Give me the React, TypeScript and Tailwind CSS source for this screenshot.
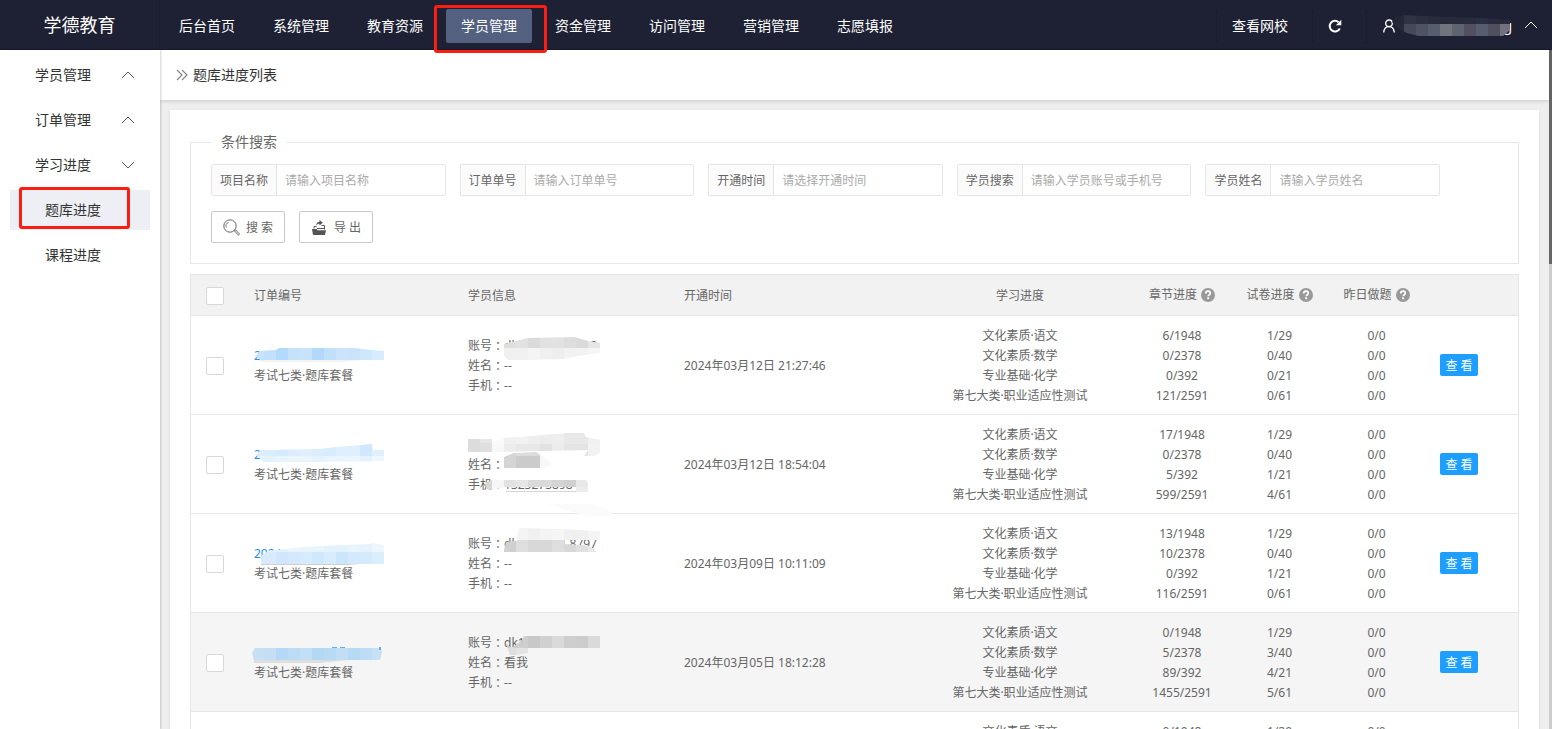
import React, { useState } from 'react';

type Tile = [number, number, number, number, string];

interface Patch {
  clip: string;
  tiles: Tile[];
}

interface Order {
  id: string;
  code: string;
  account: string[];
  name: string;
  phone: string;
  progress: [string, string, string][];
  codeMask: Patch[];
  infoMask: Patch[];
  highlighted?: boolean;
}

const NAV = ['后台首页', '系统管理', '教育资源', '学员管理', '资金管理', '访问管理', '营销管理', '志愿填报'];
const SUBJECTS = ['文化素质·语文', '文化素质·数学', '专业基础·化学', '第七大类·职业适应性测试'];

const FILTERS = [
  { id: 'project', label: '项目名称', placeholder: '请输入项目名称' },
  { id: 'order', label: '订单单号', placeholder: '请输入订单单号' },
  { id: 'opened', label: '开通时间', placeholder: '请选择开通时间' },
  { id: 'student', label: '学员搜索', placeholder: '请输入学员账号或手机号' },
  { id: 'name', label: '学员姓名', placeholder: '请输入学员姓名' },
];

// One strip of 12px mosaic blocks
const strip = (x: number, y: number, h: number, colors: string[]): Tile[] =>
  colors.map((c, i) => [x + i * 12, y, 12, h, c]);

const ORDERS: Order[] = [
  {
    id: '2024年03月12日 21:27:46',
    code: '2',
    account: ['dk', '12'],
    name: '--',
    phone: '--',
    progress: [['6/1948', '1/29', '0/0'], ['0/2378', '0/40', '0/0'], ['0/392', '0/21', '0/0'], ['121/2591', '0/61', '0/0']],
    codeMask: [
      { clip: '6,6 22,5 25,3 100,3 117,5 130,6 130,15 6,15 1,11', tiles: strip(-2, 3, 12, ['#c6e3fb', '#c0e0fb', '#b3dafa', '#c6e2fb', '#c8e4fb', '#b2d8fa', '#bfdffb', '#c9e4fb', '#c8e3fa', '#cde7fc', '#d6ebfd']) },
      { clip: '4,15 106,15 90,17 8,17', tiles: [[0, 15, 110, 2, '#f3f3f3']] },
    ],
    infoMask: [
      {
        clip: '36,9 60,3 106,2 120,6 132,8 132,18 110,21 96,24 60,25 40,25 36,21',
        tiles: [
          ...strip(36, 0, 13, ['#dfdfdf', '#e2e2e2', '#dadada', '#e2e2e2', '#e2e2e2', '#dedede', '#dadada', '#e6e6e6']),
          ...strip(36, 13, 12, ['#f0f0f0', '#f0f0f0', '#f4f4f4', '#f0f0f0', '#eeeeee', '#f2f2f2', '#f2f2f2', '#f6f6f6']),
        ],
      },
    ],
  },
  {
    id: '2024年03月12日 18:54:04',
    code: '2',
    account: [],
    name: '',
    phone: '1323273898',
    progress: [['17/1948', '1/29', '0/0'], ['0/2378', '0/40', '0/0'], ['5/392', '1/21', '0/0'], ['599/2591', '4/61', '0/0']],
    codeMask: [
      {
        clip: '6,6 66,5 82,3 118,0 119,6 130,6 130,17 55,18 10,18 3,12',
        tiles: [
          ...strip(-2, 0, 12, ['#dceefd', '#dceefd', '#d6ebfd', '#dceefd', '#e0effd', '#dceefd', '#d8ecfd', '#dfeffd', '#dfeffd', '#d0e7fd', '#dff0fd']),
          ...strip(-2, 12, 6, ['#e8f4fe', '#e4f2fe', '#e8f4fe', '#eaf5fe', '#eaf5fe', '#e4f2fe', '#e8f4fe', '#eaf5fe', '#eaf5fe', '#e4f2fe', '#eef7fe']),
        ],
      },
    ],
    infoMask: [
      { clip: '0,5 24,5 24,18 0,18', tiles: [[0, 5, 12, 13, '#dcdcdc'], [12, 5, 12, 4, '#e6e6e6'], [12, 9, 12, 9, '#dfdfdf']] },
      {
        clip: '24,8 36,4 100,-1 116,-1 118,3 132,6 132,19 126,22 116,22 120,16 24,18',
        tiles: [
          ...strip(24, -1, 11, ['#fafafa', '#f0f0f0', '#f2f2f2', '#eeeeee', '#ececec', '#eeeeee', '#e8e8e8', '#e8e8e8', '#f0f0f0']),
          ...strip(24, 10, 12, ['#f8f8f8', '#ececec', '#e8e8e8', '#e8e8e8', '#e2e2e2', '#ececec', '#e4e4e4', '#e4e4e4', '#f2f2f2']),
        ],
      },
      { clip: '36,23 46,19 68,18 75,22 84,30 76,34 36,34', tiles: [[36, 17, 12, 17, '#d4d4d4'], [48, 17, 24, 5, '#dcdcdc'], [48, 22, 24, 12, '#cbcbcb'], [72, 17, 12, 17, '#f8f8f8']] },
      { clip: '18,48 24,46 118,46 120,49 120,58 38,58 38,53 24,56 18,55', tiles: [...strip(12, 46, 7, ['#d6d6d6', '#f6f6f6', '#e2e2e2', '#e6e6e6', '#dadada', '#dadada', '#d4d4d4', '#d0d0d0', '#e8e8e8']), [18, 53, 6, 5, '#dadada'], [24, 53, 12, 5, '#f6f6f6'], [38, 57, 70, 1, '#d6d6d6'], [108, 53, 12, 5, '#ececec']] },
      { clip: '79,70 126,70 144,78 144,82 118,82', tiles: [[79, 70, 66, 12, '#fbfbfb']] },
    ],
  },
  {
    id: '2024年03月09日 10:11:09',
    code: '2024',
    account: ['dk', '8797'],
    name: '--',
    phone: '--',
    progress: [['13/1948', '1/29', '0/0'], ['10/2378', '0/40', '0/0'], ['0/392', '1/21', '0/0'], ['116/2591', '0/61', '0/0']],
    codeMask: [
      {
        clip: '7,13 14,8 40,5 66,3 116,1 118,0 130,2 130,21 7,21',
        tiles: [
          ...strip(-2, 0, 9, ['#e8f4fe', '#e8f4fe', '#e4f2fe', '#e8f4fe', '#e8f4fe', '#e8f4fe', '#e4f2fe', '#e4f2fe', '#e8f4fe', '#e6f3fe', '#eef7fe']),
          ...strip(-2, 9, 12, ['#d8ebfd', '#d8ebfd', '#cfe6fd', '#d4e9fd', '#d6ebfd', '#d0e8fc', '#d6ecfc', '#cbe5fc', '#d4e9fd', '#d4ebfc', '#dbeefd']),
        ],
      },
      { clip: '7,21 106,21 94,22 7,22', tiles: [[7, 21, 100, 1, '#cfcfcf']] },
    ],
    infoMask: [
      { clip: '49,1 52,-5 90,-4 132,-2 132,7 49,7', tiles: strip(48, -5, 12, ['#f4f4f4', '#f0f0f0', '#f4f4f4', '#f6f6f6', '#f0f0f0', '#f0f0f0', '#f4f4f4']) },
      { clip: '36,17 38,9 52,7 97,7 97,11 114,12 122,13 129,19 36,19', tiles: strip(36, 7, 12, ['#d0d0d0', '#dedede', '#d8d8d8', '#d8d8d8', '#dedede', '#d8d8d8', '#e0e0e0', '#e8e8e8']) },
    ],
  },
  {
    id: '2024年03月05日 18:12:28',
    code: '2',
    account: ['dk1'],
    name: '看我',
    phone: '--',
    highlighted: true,
    progress: [['0/1948', '1/29', '0/0'], ['5/2378', '3/40', '0/0'], ['89/392', '4/21', '0/0'], ['1455/2591', '5/61', '0/0']],
    codeMask: [
      { clip: '-2,11 1,6 126,6 128,10 126,18 0,18', tiles: strip(-2, 6, 12, ['#c6dff4', '#c4dff5', '#b4d8f5', '#bcdcf5', '#c2dff5', '#b2d8f4', '#b8daf5', '#c2def4', '#b6d9f4', '#bedcf5', '#c8e0f4']) },
      { clip: '0,18 94,18 66,21 0,21', tiles: [[0, 18, 96, 3, '#dedede']] },
      { clip: '78,5 127,5 127,8 78,6', tiles: [[78, 5, 5, 1, '#5ab0f2'], [86, 5, 5, 1, '#5ab0f2'], [125, 5, 2, 3, '#5ab0f2']] },
    ],
    infoMask: [
      { clip: '38,12 44,16 54,8 56,4 132,4 132,16 60,16 60,21 48,23 42,23', tiles: [...strip(36, 4, 12, ['#cccccc', '#cecece', '#c8c8c8', '#d0d0d0', '#dadada', '#cecece', '#cccccc', '#dadada']), ...strip(36, 16, 8, ['#dedede', '#e4e4e4'])] },
    ],
  },
  {
    id: '2024年03月04日 16:20:35',
    code: '2024',
    account: ['--'],
    name: '--',
    phone: '--',
    progress: [['0/1948', '1/29', '0/0'], ['0/2378', '0/40', '0/0'], ['0/392', '0/21', '0/0'], ['0/2591', '0/61', '0/0']],
    codeMask: [],
    infoMask: [],
  },
];

const Mosaic: React.FC<{ id: string; patches: Patch[] }> = ({ id, patches }) => (
  <svg className="pointer-events-none absolute -top-px left-0 h-px w-px overflow-visible" aria-hidden="true">
    {patches.map((p, i) => (
      <g key={i} clipPath={`url(#${id}-${i})`}>
        <clipPath id={`${id}-${i}`}><polygon points={p.clip} /></clipPath>
        {p.tiles.map(([x, y, w, h, fill], j) => (
          <rect key={j} x={x} y={y} width={w} height={h} fill={fill} shapeRendering="crispEdges" />
        ))}
      </g>
    ))}
  </svg>
);

const Chevron: React.FC<{ down?: boolean; className?: string }> = ({ down, className = '' }) => (
  <svg viewBox="0 0 14 8" className={`h-2 w-3.5 ${down ? 'rotate-180' : ''} ${className}`} fill="none" stroke="currentColor">
    <path d="M1 7 7 1l6 6" />
  </svg>
);

const HelpIcon: React.FC = () => (
  <svg viewBox="0 0 14 14" className="h-3.5 w-3.5">
    <circle cx="7" cy="7" r="7" fill="#999" />
    <path d="M4.800 5.400C4.800 4 5.700 3.200 7 3.200s2.300.8 2.300 2c0 1.600-2.100 1.700-2.100 3.100" fill="none" stroke="#fff" strokeWidth="1.8" />
    <rect x="6.200" y="9.300" width="1.900" height="1.900" fill="#fff" />
  </svg>
);

const Field: React.FC<{ label: string; children: React.ReactNode }> = ({ label, children }) => (
  <div className="flex h-5">
    <span>{label}</span>
    <span className="font-['Noto_Sans_CJK_TC',sans-serif]">：</span>
    {children}
  </div>
);

const Header: React.FC = () => (
  <header className="flex h-[50px] shrink-0 border-b border-[#16192a] bg-[#1e2133] text-sm text-white">
    <div className="flex w-40 shrink-0 items-center justify-center border-r border-[#191c2c] text-lg">学德教育</div>
    <nav className="flex items-center pt-0.5">
      {NAV.map((item) => {
        const active = item === '学员管理';
        return (
          <a key={item} href="#" className={`relative mx-1 rounded-xs px-[15px] py-[7px] leading-5 ${active ? 'bg-[#546080]' : ''}`}>
            {item}
            {active && <span className="absolute -bottom-[10px] -left-3 -right-[15px] -top-1 z-10 rounded-[3px] border-[3px] border-[#fb1d12]" />}
          </a>
        );
      })}
    </nav>
    <div className="ml-auto flex items-center pt-0.5">
      <a href="#" className="border-l border-[#191c2c] py-[7px] pl-[15px] pr-6 leading-5">查看网校</a>
      <button aria-label="刷新" className="flex h-[34px] items-center border-l border-[#191c2c] pl-[15px] pr-6">
        <svg viewBox="0 0 14 14" className="h-3.5 w-3.5">
          <path d="M11.800 9.500A5.300 5.300 0 1 1 10.600 3.200" fill="none" stroke="#fff" strokeWidth="2" />
          <path d="M13.300.8v5.400H7.900z" fill="#fff" />
        </svg>
      </button>
      <button aria-label="账户" className="relative flex h-[34px] items-center border-l border-[#191c2c] pl-4 pr-3.5">
        <svg viewBox="0 0 12 14" className="h-3.5 w-3" fill="none" stroke="#fff" strokeWidth="1.3">
          <circle cx="6" cy="4.300" r="3.300" />
          <path d="M.7 13.500C1 10 3 7.600 6 7.600s5 2.400 5.300 5.900" />
        </svg>
        <span className="w-[117px] text-right">g</span>
        <span className="absolute left-7 top-2">
          <Mosaic
            id="account"
            patches={[{
              clip: '-3,6 1,1 9,-1 28,0 90,2 115,4 115,14 108,20 23,20 12,17 4,13',
              tiles: [
                ...strip(-3, -2, 10, ['#242736', '#2e3243', '#2a2e3e', '#282b3c', '#262a3b', '#262a3b', '#282b3c', '#2a2e42', '#262a3c', '#262a3c']),
                ...strip(-3, 8, 12, ['#262938', '#444858', '#4e5364', '#565d6e', '#70747e', '#5e636f', '#524f60', '#565d6e', '#504f60', '#74717f']),
              ],
            }]}
          />
        </span>
        <Chevron className="-mt-0.5 ml-3" />
      </button>
    </div>
  </header>
);

const Sidebar: React.FC = () => (
  <aside className="z-[6] flex w-40 shrink-0 flex-col gap-[5px] bg-white pt-[5px] text-sm text-[#333] shadow-[1px_0_2px_rgba(0,0,0,0.18)]">
    {['学员管理', '订单管理', '学习进度'].map((group) => (
      <button key={group} className="flex h-10 items-center justify-between pl-[35px] pr-[25px]">
        {group}
        <Chevron down={group === '学习进度'} className="text-[#555]" />
      </button>
    ))}
    <a href="#" className="relative mx-2.5 flex h-10 items-center bg-[#eeeff4] pl-[35px]">
      题库进度
      <span className="absolute -top-[3px] bottom-px left-[9px] right-5 rounded-[3px] border-[3px] border-[#fb1d12]" />
    </a>
    <a href="#" className="mx-2.5 flex h-10 items-center pl-[35px]">课程进度</a>
  </aside>
);

const SearchPanel: React.FC = () => (
  <fieldset className="border border-[#e6e6e6] px-5 pb-5">
    <legend className="px-2.5 text-sm leading-5 text-[#666]">条件搜索</legend>
    <div className="mt-3 grid max-w-[1229px] grid-cols-5 gap-3.5">
      {FILTERS.map((f) => (
        <div key={f.id} className="flex h-8 rounded-xs border border-[#e6e6e6]">
          <label htmlFor={f.id} className="flex w-[65px] shrink-0 items-center justify-center border-r border-[#e6e6e6] bg-[#fbfbfb] pt-0.5">{f.label}</label>
          <input id={f.id} placeholder={f.placeholder} className="w-full min-w-0 pl-2 pt-0.5 outline-none placeholder:text-[#aaa]" />
        </div>
      ))}
    </div>
    <div className="mt-[15px] flex gap-3.5">
      <button className="flex h-8 w-[74px] items-center gap-1.5 whitespace-nowrap rounded-xs border border-[#c9c9c9] pl-[11px] pt-0.5">
        <svg viewBox="0 0 17 17" className="-mt-0.5 h-[17px] w-[17px] shrink-0" fill="none" stroke="#555">
          <circle cx="7" cy="7" r="6.200" strokeWidth=".9" />
          <path d="M3.300 8.500A4 4 0 0 1 5.500 3.400" strokeWidth=".8" />
          <path d="m11.400 11.800 1-1 3.800 3.800c.6.8-.5 1.800-1.200 1.200z" strokeWidth=".9" />
        </svg>
        搜 索
      </button>
      <button className="flex h-8 w-[74px] items-center gap-2 whitespace-nowrap rounded-xs border border-[#c9c9c9] pl-3 pt-0.5">
        <svg viewBox="0 0 14 15" className="-mt-0.5 h-[15px] w-3.5 shrink-0">
          <path d="M0 9h4.500l1 1.300H14L13 15H1z" fill="#555" />
          <path d="M2 8.500V6.500h2.500M9.500 5.500h3v4M5 8.500h7.500" fill="none" stroke="#555" />
          <path d="M4.300 5.500C4.300 3 5.800 1.800 7.500 1.800V0L10.800 2.800 7.500 5.500V3.800C6.200 3.800 5.200 4.200 4.300 5.500z" fill="#555" />
        </svg>
        导 出
      </button>
    </div>
  </fieldset>
);

const checkboxClass = 'block h-[18px] w-[18px] appearance-none rounded-xs border border-[#d8d8d8] bg-white checked:bg-[#1e9fff]';

const ProgressTable: React.FC = () => {
  const [selected, setSelected] = useState<string[]>([]);

  const toggle = (id: string) => {
    setSelected(selected.includes(id) ? selected.filter((s) => s !== id) : [...selected, id]);
  };

  return (
    <div className="mt-2.5 border-x border-t border-[#e6e6e6]">
      <table className="w-full table-fixed border-separate border-spacing-0 text-left leading-5 [&_td]:border-b [&_td]:border-[#e6e6e6] [&_th]:border-b [&_th]:border-[#e6e6e6] [&_th]:font-normal">
        <colgroup>
          <col className="w-[48px]" />
          <col className="w-[214px]" />
          <col className="w-[216px]" />
          <col className="w-[238px]" />
          <col className="w-[226px]" />
          <col className="w-[98px]" />
          <col className="w-[97px]" />
          <col className="w-[97px]" />
          <col className="w-[93px]" />
        </colgroup>
        <thead>
          <tr className="h-[41px] bg-[#f2f2f2]">
            <th className="pb-0 pl-[15px] pr-0 pt-0.5">
              <input
                type="checkbox"
                aria-label="全选"
                className={checkboxClass}
                checked={selected.length === ORDERS.length}
                onChange={(e) => setSelected(e.target.checked ? ORDERS.map((o) => o.id) : [])}
              />
            </th>
            <th className="pb-0 pl-[15px] pt-0.5">订单编号</th>
            <th className="pb-0 pl-[15px] pt-0.5">学员信息</th>
            <th className="pb-0 pl-[15px] pt-0.5">开通时间</th>
            <th className="pb-0 pt-0.5 text-center">学习进度</th>
            {['章节进度', '试卷进度', '昨日做题'].map((h) => (
              <th key={h} className="p-0">
                <div className="flex items-center justify-center gap-1">{h}<HelpIcon /></div>
              </th>
            ))}
            <th aria-label="操作" />
          </tr>
        </thead>
        <tbody>
          {ORDERS.map((o, idx) => (
            <tr key={o.id} className={`h-[99px] ${o.highlighted ? 'bg-[#f5f5f5]' : 'bg-white'}`}>
              <td className="px-0 pb-0 pt-0.5">
                <input
                  type="checkbox"
                  aria-label={`选择 ${o.id}`}
                  className={`ml-[15px] ${checkboxClass}`}
                  checked={selected.includes(o.id)}
                  onChange={() => toggle(o.id)}
                />
              </td>
              <td className="px-0 pb-0 pt-0.5">
                <div className="relative ml-[15px]">
                  <a href="#" className="block h-5 text-[#1e8fef]">{o.code}</a>
                  <div>考试七类·题库套餐</div>
                  <Mosaic id={`code-${idx}`} patches={o.codeMask} />
                </div>
              </td>
              <td className="px-0 pb-0 pt-0.5">
                <div className="relative ml-[15px]">
                  {o.account.length > 0 ? (
                    <Field label="账号">
                      <span className="flex w-[93px] justify-between">{o.account.map((a) => <span key={a}>{a}</span>)}</span>
                    </Field>
                  ) : (
                    <div className="h-5" />
                  )}
                  <Field label="姓名">{o.name}</Field>
                  <Field label="手机">{o.phone}</Field>
                  <Mosaic id={`info-${idx}`} patches={o.infoMask} />
                </div>
              </td>
              <td className="px-0 pb-0 pt-0.5"><div className="ml-[15px]">{o.id}</div></td>
              <td className="px-0 pb-0 pt-0.5 text-center">
                {SUBJECTS.map((s) => <div key={s}>{s}</div>)}
              </td>
              {[0, 1, 2].map((col) => (
                <td key={col} className="px-0 pb-0 pt-0.5 text-center">
                  {o.progress.map((p, i) => <div key={i}>{p[col]}</div>)}
                </td>
              ))}
              <td className="p-0">
                <button className="ml-[15px] block h-[22px] w-[38px] whitespace-nowrap rounded-xs bg-[#1e9fff] pt-0.5 text-white">查 看</button>
              </td>
            </tr>
          ))}
        </tbody>
      </table>
    </div>
  );
};

export default function App() {
  return (
    <div className="flex h-screen flex-col overflow-hidden font-['Noto_Sans','Noto_Sans_CJK_SC',sans-serif]">
      <Header />
      <div className="flex min-h-0 flex-1">
        <Sidebar />
        <div className="flex min-w-0 flex-1 flex-col bg-[#eeeeee]">
          <div className="z-[5] flex h-[50px] shrink-0 items-center gap-[5px] bg-white pl-4 text-sm text-[#333] shadow-[0_1px_4px_rgba(0,0,0,0.16)]">
            <svg viewBox="0 0 12 12" className="h-3 w-3" fill="none" stroke="#888" strokeWidth="1.2">
              <path d="m1 1 5 5-5 5M6 1l5 5-5 5" />
            </svg>
            题库进度列表
          </div>
          <main className="min-h-0 flex-1 overflow-y-auto px-2.5 pt-2.5 [scrollbar-width:none]">
            <div className="bg-white px-5 pb-5 pt-[22px] text-xs text-[#666] shadow-[0_1px_3px_rgba(0,0,0,0.08)]">
              <SearchPanel />
              <ProgressTable />
            </div>
          </main>
        </div>
        <div className="w-[3px] shrink-0 bg-[#cccccc]">
          <div className="h-[214px] bg-[#666666]" />
        </div>
      </div>
    </div>
  );
}
